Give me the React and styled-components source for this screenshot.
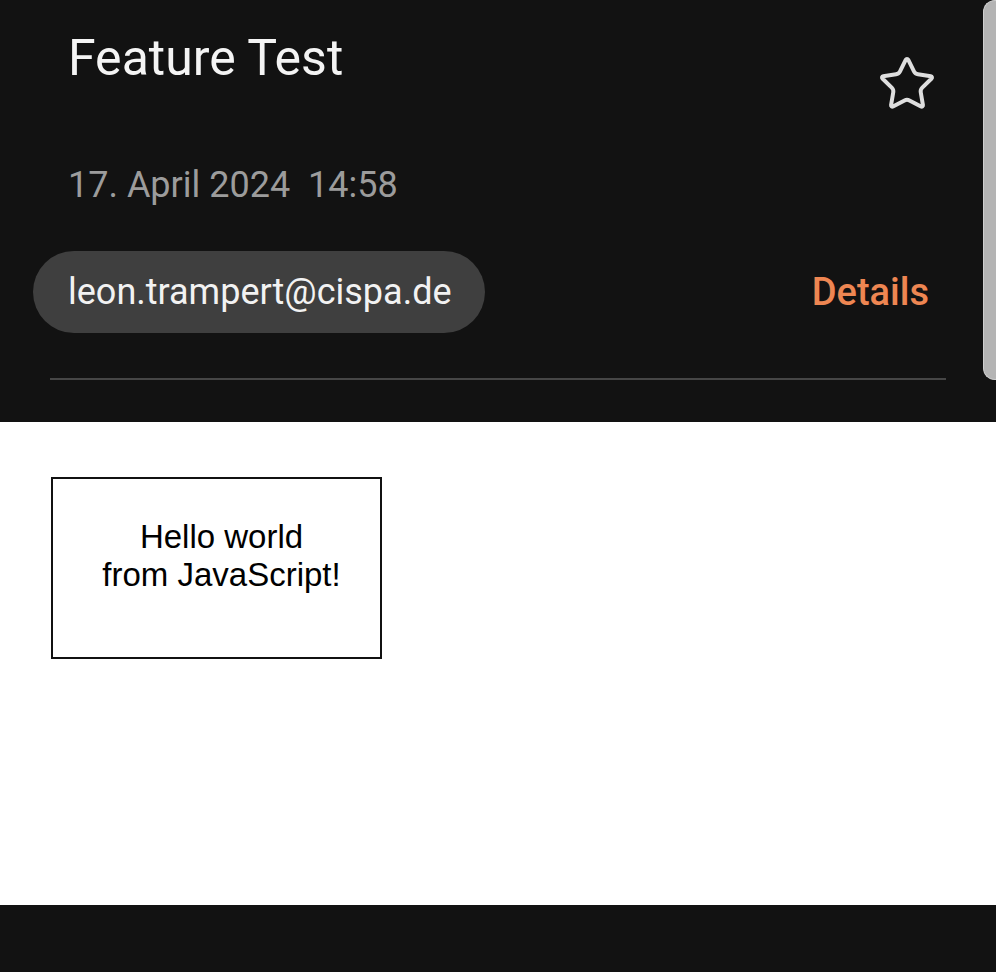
import { createGlobalStyle, styled } from "styled-components";
import { Star } from "lucide-react";

const GlobalStyle = createGlobalStyle`
  html, body {
    margin: 0;
    padding: 0;
    background: #121212;
  }

  * {
    box-sizing: border-box;
  }
`;

export default function App() {
  return (
    <>
      <GlobalStyle />
      <Screen>
        <Header>
          <TitleRow>
            <Title>Feature Test</Title>
            <StarButton aria-label="Mark as favourite">
              <Star size={60} strokeWidth={1.6} />
            </StarButton>
          </TitleRow>

          <DateLine>17. April 2024&nbsp;&nbsp;14:58</DateLine>

          <SenderRow>
            <SenderChip>leon.trampert@cispa.de</SenderChip>
            <DetailsLink>Details</DetailsLink>
          </SenderRow>

          <Divider />
        </Header>

        <MessageBody>
          <CanvasBox>
            <CanvasText>
              Hello world
              <br />
              from JavaScript!
            </CanvasText>
          </CanvasBox>
        </MessageBody>

        <BottomBar />

        <ScrollThumb />
      </Screen>
    </>
  );
}

const Screen = styled.div`
  position: relative;
  display: flex;
  flex-direction: column;
  min-height: 100vh;
  font-family: Roboto, "Noto Sans", sans-serif;
  overflow: hidden;
`;

const Header = styled.header`
  background: #121212;
  padding: 28px 50px 42px 50px;
`;

const TitleRow = styled.div`
  display: flex;
  justify-content: space-between;
  align-items: flex-start;
  padding-left: 18px;
`;

const Title = styled.h1`
  margin: 0;
  color: #f4f4f4;
  font-size: 50px;
  line-height: 60px;
  font-weight: 400;
`;

const StarButton = styled.div`
  display: flex;
  margin-top: 26px;
  margin-right: 9px;
  color: #dedede;
`;

const DateLine = styled.div`
  margin-top: 49px;
  padding-left: 18px;
  color: #9c9c9c;
  font-size: 36px;
  line-height: 44px;
`;

const SenderRow = styled.div`
  display: flex;
  justify-content: space-between;
  align-items: center;
  margin-top: 44px;
  margin-left: -17px;
`;

const SenderChip = styled.div`
  display: flex;
  align-items: center;
  height: 82px;
  padding: 0 33px 0 35px;
  border-radius: 41px;
  background: #3f3f3f;
  color: #f2f2f2;
  font-size: 36px;
`;

const DetailsLink = styled.a`
  margin-right: 17px;
  color: #ee8652;
  font-size: 38px;
  font-weight: 500;
  cursor: pointer;
`;

const Divider = styled.hr`
  margin: 45px 0 0;
  border: none;
  height: 2px;
  background: #464646;
`;

const MessageBody = styled.main`
  flex: 1;
  background: #ffffff;
  padding: 55px 0 0 51px;
`;

const CanvasBox = styled.div`
  width: 331px;
  height: 182px;
  border: 2px solid #111111;
  padding: 39px 0 0 10px;
`;

const CanvasText = styled.div`
  color: #000000;
  font-family: "Liberation Sans", Arial, sans-serif;
  font-size: 33px;
  line-height: 38px;
  text-align: center;
`;

const BottomBar = styled.footer`
  height: 67px;
  background: #121212;
`;

const ScrollThumb = styled.div`
  position: absolute;
  top: 0;
  right: 0;
  width: 13px;
  height: 380px;
  border-radius: 12px 0 0 12px;
  background: #b4b4b4;
  border: 1px solid #cfcfcf;
  border-right: none;
`;
